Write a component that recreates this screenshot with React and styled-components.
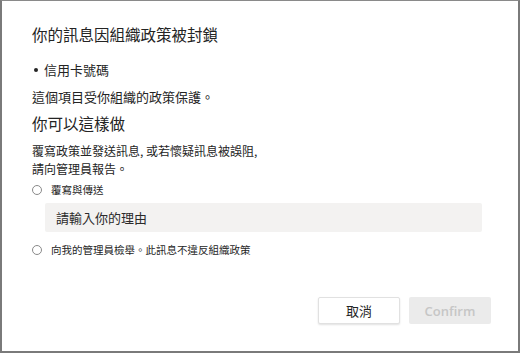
import React from 'react';
import styled, { createGlobalStyle } from 'styled-components';

const GlobalStyle = createGlobalStyle`
  html, body {
    margin: 0;
    padding: 0;
    background: #ffffff;
  }
  body {
    font-family: "Noto Sans CJK TC", "Noto Sans", sans-serif;
    color: #242424;
  }
`;

const Dialog = styled.div`
  width: 520px;
  height: 353px;
  box-sizing: border-box;
  border: 1px solid #8a8a8a;
  border-left: 2px solid #7a7a7a;
  border-bottom: 2px solid #7a7a7a;
  border-right: 2px solid #7a7a7a;
  padding: 23px 27px 27px 30px;
  display: flex;
  flex-direction: column;
  background: #fff;
`;

const Heading = styled.h2`
  margin: ${(p) => p.$top || 0}px 0 0;
  font-size: 15.5px;
  line-height: 20px;
  font-weight: 400;
`;

const Text = styled.p`
  margin: ${(p) => p.$top || 0}px 0 0;
  font-size: ${(p) => p.$size || 13}px;
  line-height: 18px;
  white-space: pre-line;
`;

const Bullets = styled.ul`
  margin: 17px 0 0;
  padding: 0;
  list-style: none;
`;

const BulletItem = styled.li`
  display: flex;
  align-items: center;
  gap: 6px;
  font-size: 13px;
  line-height: 18px;
  &::before {
    content: '';
    width: 4px;
    height: 4px;
    border-radius: 50%;
    background: #242424;
    margin-left: 2px;
  }
`;

const Option = styled.label`
  display: flex;
  align-items: center;
  gap: 9px;
  margin-top: ${(p) => p.$top || 0}px;
  font-size: 10.5px;
  line-height: 14px;
`;

const Radio = styled.span`
  width: 10px;
  height: 10px;
  box-sizing: border-box;
  border: 1px solid #8a8a8a;
  border-radius: 50%;
  flex: none;
`;

const Reason = styled.input`
  margin: 6px 0 0 13px;
  width: 437px;
  height: 29px;
  box-sizing: border-box;
  border: none;
  border-radius: 2px;
  background: #f3f2f1;
  padding: 0 11px;
  font-family: "Noto Sans CJK TC", "Noto Sans", sans-serif;
  font-size: 13px;
  outline: none;
  &::placeholder {
    color: #2b2b2b;
  }
`;

const Footer = styled.div`
  margin-top: auto;
  display: flex;
  justify-content: flex-end;
  gap: 9px;
`;

const Button = styled.button`
  width: 82px;
  height: 27px;
  box-sizing: border-box;
  border-radius: 2px;
  font-size: 13px;
  font-family: "Open Sans", "Noto Sans CJK TC", sans-serif;
  font-weight: ${(p) => (p.$primary ? 600 : 400)};
  background: ${(p) => (p.$primary ? '#ebebeb' : '#ffffff')};
  color: ${(p) => (p.$primary ? '#c6c6c6' : '#242424')};
  border: ${(p) => (p.$primary ? 'none' : '1px solid #e1e1e1')};
  box-shadow: ${(p) => (p.$primary ? 'none' : '0 1px 2px rgba(0,0,0,0.12)')};
  padding: 0;
  cursor: pointer;
`;

export default function App() {
  return (
    <>
      <GlobalStyle />
      <Dialog>
        <Heading>你的訊息因組織政策被封鎖</Heading>
        <Bullets>
          <BulletItem>信用卡號碼</BulletItem>
        </Bullets>
        <Text $top={9}>這個項目受你組織的政策保護。</Text>
        <Heading $top={7}>你可以這樣做</Heading>
        <Text $top={9} $size={12}>{'覆寫政策並發送訊息, 或若懷疑訊息被誤阻,\n請向管理員報告。'}</Text>
        <Option $top={5}>
          <Radio />
          覆寫與傳送
        </Option>
        <Reason placeholder="請輸入你的理由" />
        <Option $top={11}>
          <Radio />
          向我的管理員檢舉。此訊息不違反組織政策
        </Option>
        <Footer>
          <Button>取消</Button>
          <Button $primary disabled>Confirm</Button>
        </Footer>
      </Dialog>
    </>
  );
}
